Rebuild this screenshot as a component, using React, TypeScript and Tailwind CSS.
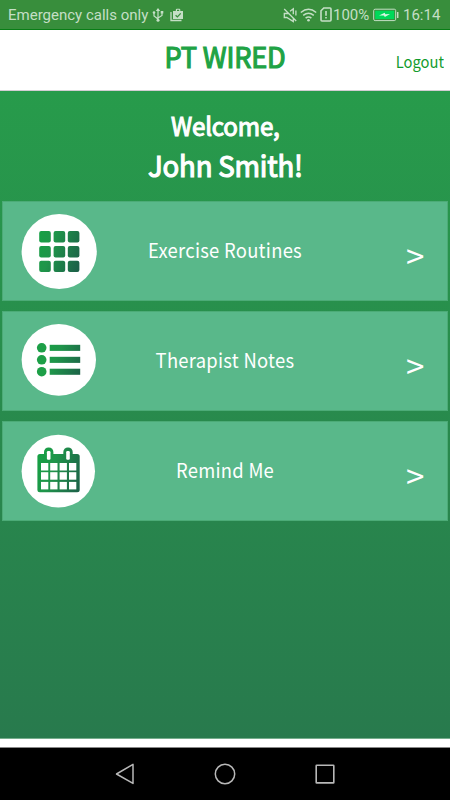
import React from "react";

const UI = "font-['Noto_Sans_CJK_SC','Noto_Sans',sans-serif]";

function Gradient({ id, x1, x2 }: { id: string; x1: number; x2: number }) {
  return (
    <defs>
      <linearGradient id={id} gradientUnits="userSpaceOnUse" x1={x1} y1="30" x2={x2} y2="46">
        <stop offset="0" stopColor="#16a044" />
        <stop offset="0.35" stopColor="#1f954a" />
        <stop offset="1" stopColor="#1c6148" />
      </linearGradient>
    </defs>
  );
}

function GridIcon() {
  return (
    <svg width="80" height="80" viewBox="0 0 80 80">
      <Gradient id="grid" x1={16} x2={62} />
      <ellipse cx="39.2" cy="40.5" rx="37.6" ry="37.5" fill="#fff" />
      {[20, 35, 49.7].map((y) =>
        [19.2, 33.6, 47.8].map((x) => (
          <rect key={`${x}-${y}`} x={x} y={y} width="11.6" height="11.4" rx="2" fill="url(#grid)" />
        ))
      )}
    </svg>
  );
}

function ListIcon() {
  return (
    <svg width="80" height="80" viewBox="0 0 80 80">
      <Gradient id="list" x1={22} x2={64} />
      <ellipse cx="38.8" cy="38.8" rx="37.2" ry="35.9" fill="#fff" />
      {[26.8, 38.8, 50.7].map((y) => (
        <g key={y} fill="url(#list)">
          <circle cx="21.7" cy={y} r="4.8" fill="#1d9f47" />
          <rect x="29.7" y={y - 3} width="30.5" height="6.1" />
        </g>
      ))}
    </svg>
  );
}

function CalendarIcon() {
  return (
    <svg width="80" height="80" viewBox="0 0 80 80">
      <Gradient id="cal" x1={16} x2={64} />
      <ellipse cx="38.3" cy="40.2" rx="36.7" ry="36.4" fill="#fff" />
      <rect x="17.4" y="23" width="42.3" height="38.2" rx="2.5" fill="url(#cal)" />
      {[28.7, 48].map((x) => (
        <g key={x}>
          <rect x={x - 4.7} y="16.5" width="9.4" height="14" rx="4.5" fill="url(#cal)" />
          <rect x={x - 1.8} y="20" width="3.6" height="8.7" rx="1.2" fill="#fff" />
        </g>
      ))}
      {[32, 41.2, 50.9].map((y) =>
        [21, 30.2, 39.6, 49].map((x) => (
          <rect key={`${x}-${y}`} x={x} y={y} width="7.3" height="7.5" fill="#fff" />
        ))
      )}
    </svg>
  );
}

function StatusBar() {
  return (
    <div className="flex h-[30px] items-center border-b border-[#087d16] bg-[#388e3c] pl-2 pr-[9px] font-[Roboto,sans-serif] text-[#c5dfc6]">
      <span className="w-[142px] whitespace-nowrap pt-px text-[15px] leading-[29px]">Emergency calls only</span>
      <svg className="ml-[2px]" width="12" height="16" viewBox="0 0 12 16" fill="none" stroke="currentColor" strokeWidth="1.2">
        <path d="M6 2v11M2 6v3l4 3M10 6v2.5L6 11" />
        <path d="M3.8 4 6 1l2.2 3zM8.7 4h2.6v2.6H8.7z" fill="currentColor" stroke="none" />
        <circle cx="2" cy="5.5" r="1.3" fill="currentColor" stroke="none" />
        <circle cx="6" cy="13.3" r="1.5" fill="currentColor" stroke="none" />
      </svg>
      <svg className="ml-[6px]" width="14" height="14" viewBox="0 0 14 14">
        <path d="M1 4v8.5h10.5" fill="none" stroke="currentColor" strokeWidth="1.3" />
        <path d="M3 3h2.8V1.8Q5.8.7 7 .7h2.2q1.1 0 1.1 1.1V3H13v8H3zM7 3h2.2V1.8H7z" fill="currentColor" fillRule="evenodd" />
        <path d="m5.6 7.2 1.8 1.7 3.3-3.5" fill="none" stroke="#388e3c" strokeWidth="1.3" />
      </svg>
      <div className="ml-auto flex items-center">
        <svg width="15" height="16" viewBox="0 0 15 16" fill="none" stroke="currentColor" strokeWidth="1.3">
          <path d="m1.2 2 12 12M6 6.4 3.5 6.5H1.3v4h2.5l6.5 4V11M7 4.2l3.3-2.5v5.5M12.9 3.5v5" />
        </svg>
        <svg className="ml-[2px]" width="17" height="14" viewBox="0 0 17 14" fill="none" stroke="currentColor" strokeWidth="1.5">
          <path d="M.8 4.5q7.7-6.4 15.4 0M3.2 7.4q5.3-4.4 10.6 0M5.6 10.2q2.9-2.3 5.8 0" />
          <circle cx="8.5" cy="12.3" r="1.3" fill="currentColor" stroke="none" />
        </svg>
        <svg className="ml-[3px]" width="12" height="15" viewBox="0 0 12 15" fill="none" stroke="currentColor" strokeWidth="1.6">
          <path d="M3.8 1H10q1 0 1 1v11q0 1-1 1H2q-1 0-1-1V3.8zM6 4v4.8M6 10v1.6" />
        </svg>
        <span className="ml-[1px] w-[39px] whitespace-nowrap text-[15px] leading-[30px]">100%</span>
        <svg className="ml-px" width="26" height="14" viewBox="0 0 26 14">
          <rect x="0.7" y="1.2" width="22" height="11.4" rx="1.4" fill="none" stroke="currentColor" />
          <rect x="2.2" y="2.7" width="19" height="8.4" fill="#00d95a" />
          <path d="m6 7.4 5.7-2.6.6 1.5 4.7-.2-5.2 2.8-.8-1.5z" fill="#d9f7e2" />
          <path d="M24.7 4v6" stroke="currentColor" strokeWidth="1.5" />
        </svg>
        <span className="ml-[4px] w-[38px] whitespace-nowrap pt-px text-[15px] leading-[29px]">16:14</span>
      </div>
    </div>
  );
}

function MenuCard({ icon, label }: { icon: React.ReactNode; label: string }) {
  return (
    <button className="grid h-[100px] w-full grid-cols-[97px_1fr_97px] border border-[#4cab77] bg-[#59b88a] text-white">
      <span className="ml-[17px] mt-[9px] block h-[80px] w-[80px]">{icon}</span>
      <span className="mt-[34px] scale-x-[0.92] whitespace-nowrap text-center text-[20px] leading-[28px] tracking-[0.3px]">{label}</span>
      <span className="ml-[56px] mt-[37px] text-left text-[33px] leading-[32px]">&gt;</span>
    </button>
  );
}

export default function App() {
  return (
    <div className={`flex h-[800px] w-[450px] flex-col overflow-hidden bg-white ${UI}`}>
      <StatusBar />
      <header className="grid h-[61px] grid-cols-[100px_1fr_100px] border-b border-[#d3cdd3] bg-white">
        <h1 className="col-start-2 mt-[6px] scale-x-[0.97] whitespace-nowrap text-center text-[28px] leading-[40px] tracking-[-0.2px] text-[#1fa345] [-webkit-text-stroke:1.2px_#1fa345]">PT WIRED</h1>
        <a className="mr-[6px] mt-[19px] origin-right scale-x-[0.92] whitespace-nowrap text-right text-[16px] leading-[24px] text-[#129b2d]">Logout</a>
      </header>
      <main className="flex h-[648px] flex-col border-b border-[#75ad8c] bg-linear-to-b from-[#279b4b] to-[#287a4d] px-[2px]">
        <div className="flex h-[110px] flex-col items-center pt-[15px] text-white">
          <p className="scale-x-[0.965] whitespace-nowrap text-[25px] leading-[38px] tracking-[-0.2px] [-webkit-text-stroke:1.1px_white]">Welcome,</p>
          <p className="scale-x-[0.95] whitespace-nowrap text-[29px] leading-[40px] tracking-[-0.2px] [-webkit-text-stroke:1.2px_white]">John Smith!</p>
        </div>
        <div className="flex flex-col gap-[10px]">
          <MenuCard icon={<GridIcon />} label="Exercise Routines" />
          <MenuCard icon={<ListIcon />} label="Therapist Notes" />
          <MenuCard icon={<CalendarIcon />} label="Remind Me" />
        </div>
      </main>
      <div className="h-[8px] bg-white" />
      <nav className="flex h-[53px] items-center justify-between border-t border-[#888] bg-black px-[114px]">
        <svg width="22" height="24" viewBox="0 0 22 24" fill="none" stroke="#b8b8b8" strokeWidth="1.5">
          <path d="M19 2.4v19L2.5 12z" strokeLinejoin="round" />
        </svg>
        <svg width="22" height="24" viewBox="0 0 22 24" fill="none" stroke="#b8b8b8" strokeWidth="1.5">
          <circle cx="11" cy="12" r="9.7" />
        </svg>
        <svg width="22" height="24" viewBox="0 0 22 24" fill="none" stroke="#b8b8b8" strokeWidth="1.6">
          <rect x="2.2" y="3.3" width="17.6" height="17.6" rx="0.5" />
        </svg>
      </nav>
    </div>
  );
}
